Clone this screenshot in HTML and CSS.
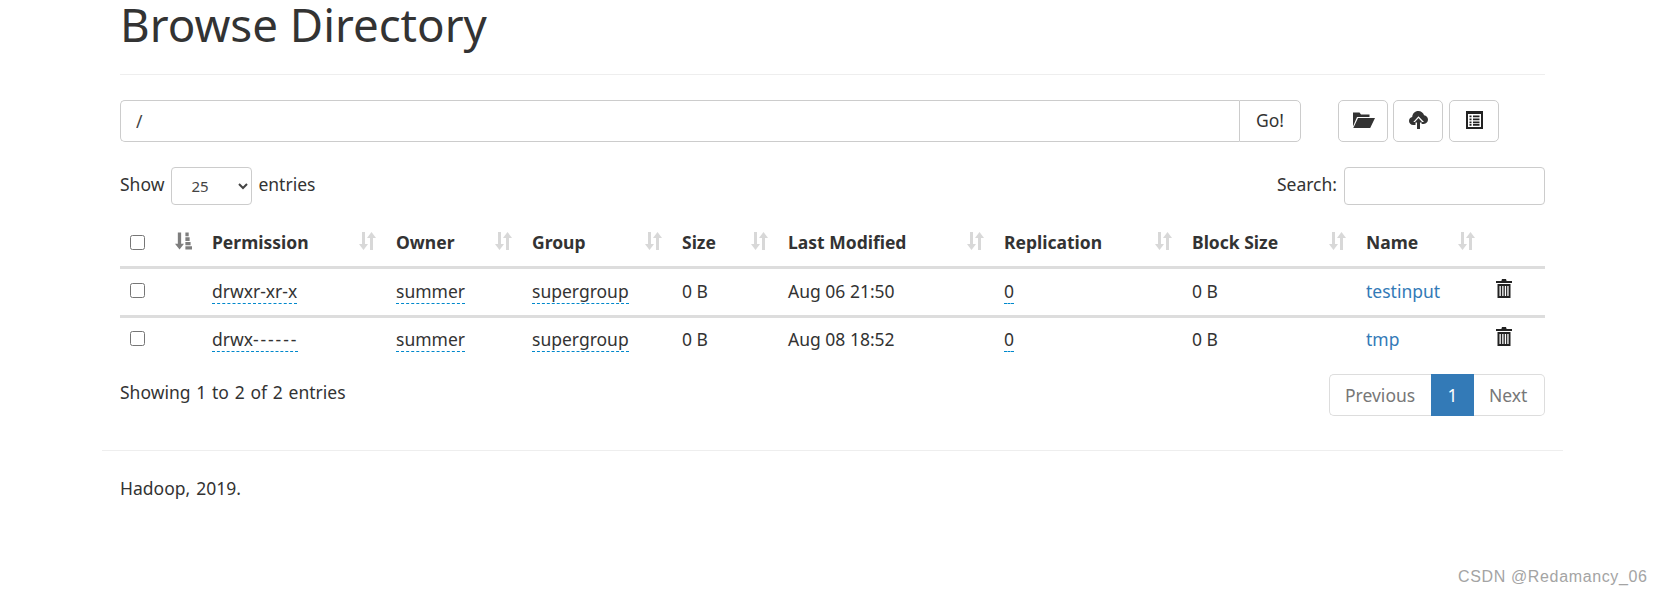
FILE: index.html
```html
<!DOCTYPE html>
<html lang="en">
<head>
<meta charset="utf-8">
<title>Browsing HDFS</title>
<link rel="stylesheet" href="styles.css">
</head>
<body>
<svg class="defs" width="0" height="0" aria-hidden="true">
  <symbol id="i-sort" viewBox="0 0 17 18">
    <path d="M3 0h3v12h3l-4.500 6L0 12h3zM11 18V6H8l4.500-6L17 6h-3v12z" fill="currentColor"/>
  </symbol>
  <symbol id="i-sorted" viewBox="0 0 18 18">
    <path d="M3 0h3.500v12h3l-4.700 6L0 12h3z" fill="currentColor"/>
    <path d="M11 0h3.500v4H11zM11 5h4.500v4H11zM11 10h5.500v3.500H11zM11 14.500h7V18h-7z" fill="currentColor"/>
  </symbol>
  <symbol id="i-trash" viewBox="0 0 16 19">
    <path fill-rule="evenodd" d="M6 0h4l.6 2H16v2H0V2h5.400zM1.500 5h13v14h-13zM3.500 7v10h1.300V7zM6.200 7v10h1.300V7zM8.800 7v10h1.300V7zM11.300 7v10h1.300V7z" fill="currentColor"/>
  </symbol>
</svg>

<div class="container">
  <h1 class="title">Browse Directory</h1>
  <hr class="rule">

  <div class="toolbar">
    <div class="path-group">
      <input class="path-input" type="text" value="/">
      <button class="btn go-btn" type="button">Go!</button>
    </div>
    <div class="actions">
      <button class="btn icon-btn" type="button" aria-label="Create directory">
        <svg width="23" height="17" viewBox="0 0 23 17"><path d="M1 1.500h6.500L9 3.500h8.500V6H5L1 15.500zM6 7h17l-4.800 10H1.300z" fill="#333"/></svg>
      </button>
      <button class="btn icon-btn" type="button" aria-label="Upload">
        <svg width="19" height="19" viewBox="0 0 19 19"><path d="M6.500 15H4.200C1.800 15 0 13.300 0 11c0-2 1.400-3.500 3.200-3.900C3.400 3.500 6 1 9.300 1c2.700 0 5 1.700 5.800 4.200 2.200.3 3.900 2.100 3.900 4.400 0 2.400-1.700 4.400-4.300 4.400h-2.100v-2h2.400L9.500 6.300 4.300 12h2.200z" fill="#333"/><path d="M9.500 8l4 4.500h-2.500V19H8v-6.500H5.500z" fill="#333"/></svg>
      </button>
      <button class="btn icon-btn icon-btn-last" type="button" aria-label="Cut and paste">
        <svg width="17" height="18" viewBox="0 0 17 18"><path fill-rule="evenodd" d="M0 0h17v18H0zM2 3v13h13V3zM3.500 4.500h2v1.700h-2zM7 4.500h6.500v1.700H7zM3.500 7.500h2v1.700h-2zM7 7.500h6.500v1.700H7zM3.500 10.500h2v1.700h-2zM7 10.500h6.500v1.700H7zM3.500 13h2v1.700h-2zM7 13h6.500v1.700H7z" fill="#222"/></svg>
      </button>
    </div>
  </div>

  <div class="table-controls">
    <label class="length"><span class="lbl">Show</span>
      <select class="length-select"><option>25</option></select>
      <span class="lbl">entries</span></label>
    <label class="search"><span class="lbl">Search:</span>
      <input class="search-input" type="search">
    </label>
  </div>

  <table class="files">
    <colgroup>
      <col class="c-check"><col class="c-perm"><col class="c-owner"><col class="c-group"><col class="c-size"><col class="c-mod"><col class="c-repl"><col class="c-block"><col class="c-name"><col class="c-del">
    </colgroup>
    <thead>
      <tr>
        <th><input class="check" type="checkbox"><svg class="sort sort-on"><use href="#i-sorted"/></svg></th>
        <th>Permission<svg class="sort"><use href="#i-sort"/></svg></th>
        <th>Owner<svg class="sort"><use href="#i-sort"/></svg></th>
        <th>Group<svg class="sort"><use href="#i-sort"/></svg></th>
        <th>Size<svg class="sort"><use href="#i-sort"/></svg></th>
        <th>Last Modified<svg class="sort"><use href="#i-sort"/></svg></th>
        <th>Replication<svg class="sort"><use href="#i-sort"/></svg></th>
        <th>Block Size<svg class="sort"><use href="#i-sort"/></svg></th>
        <th>Name<svg class="sort"><use href="#i-sort"/></svg></th>
        <th></th>
      </tr>
    </thead>
    <tbody>
      <tr>
        <td><input class="check" type="checkbox"></td>
        <td><span class="editable">drwxr-xr-x</span></td>
        <td><span class="editable">summer</span></td>
        <td><span class="editable">supergroup</span></td>
        <td>0 B</td>
        <td>Aug 06 21:50</td>
        <td><span class="editable">0</span></td>
        <td>0 B</td>
        <td><a class="link" href="#">testinput</a></td>
        <td><svg class="trash"><use href="#i-trash"/></svg></td>
      </tr>
      <tr>
        <td><input class="check" type="checkbox"></td>
        <td><span class="editable">drwx<span class="dashes">------</span></span></td>
        <td><span class="editable">summer</span></td>
        <td><span class="editable">supergroup</span></td>
        <td>0 B</td>
        <td>Aug 08 18:52</td>
        <td><span class="editable">0</span></td>
        <td>0 B</td>
        <td><a class="link" href="#">tmp</a></td>
        <td><svg class="trash"><use href="#i-trash"/></svg></td>
      </tr>
    </tbody>
  </table>

  <div class="table-footer">
    <div class="info">Showing 1 to 2 of 2 entries</div>
    <ul class="pagination">
      <li class="page page-first">Previous</li>
      <li class="page page-active">1</li>
      <li class="page page-last">Next</li>
    </ul>
  </div>

  <hr class="footer-rule">
  <p class="footer-text">Hadoop, 2019.</p>
</div>

<div class="watermark">CSDN @Redamancy_06</div>
</body>
</html>
```

FILE: styles.css
```css
* { box-sizing: border-box; }

html, body { margin: 0; padding: 0; }

body {
  width: 1661px;
  height: 596px;
  overflow: hidden;
  background: #fff;
  color: #333;
  font-family: "Noto Sans", "Open Sans", sans-serif;
  font-size: 17.5px;
  line-height: 24px;
  position: relative;
}

.defs { position: absolute; }

.container {
  width: 1461px;
  margin-left: 102px;
  padding: 0 18px;
}

.title {
  margin: 0;
  height: 56px;
  font-size: 45.7px;
  line-height: 48px;
  font-weight: 400;
  color: #333;
}

.rule {
  margin: 18px 0 0;
  border: 0;
  border-top: 1px solid #eee;
}

.toolbar {
  display: flex;
  margin-top: 25px;
}

.path-group {
  display: flex;
  width: 1181px;
  height: 42px;
}

.path-input {
  flex: 1;
  height: 42px;
  padding: 0 15px;
  border: 1px solid #ccc;
  border-right: 0;
  border-radius: 5px 0 0 5px;
  font: inherit;
  color: #444;
  outline: 0;
}

.btn {
  height: 42px;
  background: #fff;
  border: 1px solid #ccc;
  border-radius: 5px;
  color: #333;
  font: inherit;
  padding: 0 0 3px;
}

.go-btn {
  width: 62px;
  border-radius: 0 5px 5px 0;
}

.actions {
  display: flex;
  gap: 5px;
  margin-left: 37px;
}

.icon-btn {
  width: 50px;
  display: flex;
  align-items: center;
  justify-content: center;
}

.icon-btn-last { margin-left: 1px; }

.table-controls {
  display: flex;
  justify-content: space-between;
  margin-top: 25px;
  height: 38px;
  align-items: center;
}

.length, .search {
  display: flex;
  align-items: center;
  gap: 6px;
}

.lbl { padding-bottom: 5px; }

.length .lbl:first-child { margin-right: 1px; }

.length-select {
  width: 81px;
  height: 38px;
  padding: 0 15px;
  background: #fff;
  border: 1px solid #ccc;
  border-radius: 4px;
  color: #444;
  font-family: inherit;
  font-size: 15px;
}

.search { gap: 7px; }

.search-input {
  width: 201px;
  height: 38px;
  border: 1px solid #ccc;
  border-radius: 4px;
  outline: 0;
}

.files {
  width: 1425px;
  margin-top: 17px;
  border-collapse: collapse;
  table-layout: fixed;
}

.c-check { width: 82px; }
.c-perm { width: 184px; }
.c-owner { width: 136px; }
.c-group { width: 150px; }
.c-size { width: 106px; }
.c-mod { width: 216px; }
.c-repl { width: 188px; }
.c-block { width: 174px; }
.c-name { width: 129px; }
.c-del { width: 60px; }

.files th {
  position: relative;
  height: 45px;
  padding: 0 10px 3px;
  text-align: left;
  font-weight: 700;
  vertical-align: middle;
  border-bottom: 3px solid #ddd;
}

.files td {
  height: 49px;
  padding: 0 10px 2px;
  vertical-align: middle;
  border-bottom: 3px solid #ddd;
}

.files tbody tr:last-child td {
  height: 47px;
  border-bottom-color: transparent;
}

.check {
  display: block;
  width: 15px;
  height: 15px;
  margin: 0;
}

.sort {
  position: absolute;
  right: 10px;
  top: 10px;
  width: 17px;
  height: 18px;
  color: #000;
  opacity: .15;
}

.sort-on { opacity: .5; }

.editable {
  border-bottom: 1px dashed #08c;
}

.dashes { letter-spacing: 1.9px; }

.link {
  color: #337ab7;
  text-decoration: none;
}

.trash {
  display: block;
  width: 16px;
  height: 19px;
  color: #222;
  margin: -5px 0 0 1px;
}

.table-footer {
  display: flex;
  justify-content: space-between;
  align-items: flex-start;
  margin-top: 9px;
}

.info {
  margin-top: 6px;
  word-spacing: 1.2px;
}

.pagination {
  display: flex;
  margin: 0;
  padding: 0;
  list-style: none;
}

.page {
  height: 42px;
  padding: 0 15px;
  line-height: 40px;
  color: #777;
  background: #fff;
  border: 1px solid #ddd;
}

.page-first {
  width: 102px;
  border-radius: 5px 0 0 5px;
  border-right: 0;
}

.page-active {
  width: 43px;
  padding: 0;
  text-align: center;
  color: #fff;
  background: #337ab7;
  border-color: #337ab7;
}

.page-last {
  width: 71px;
  border-radius: 0 5px 5px 0;
  border-left: 0;
}

.footer-rule {
  margin: 34px -18px 0;
  border: 0;
  border-top: 1px solid #eee;
}

.footer-text {
  margin: 25px 0 0;
  word-spacing: 1.5px;
}

.watermark {
  position: absolute;
  left: 1458px;
  top: 567px;
  font-family: "Liberation Sans", Arial, sans-serif;
  font-size: 16px;
  line-height: 20px;
  letter-spacing: .64px;
  color: #a4a4a4;
  white-space: nowrap;
}
```
